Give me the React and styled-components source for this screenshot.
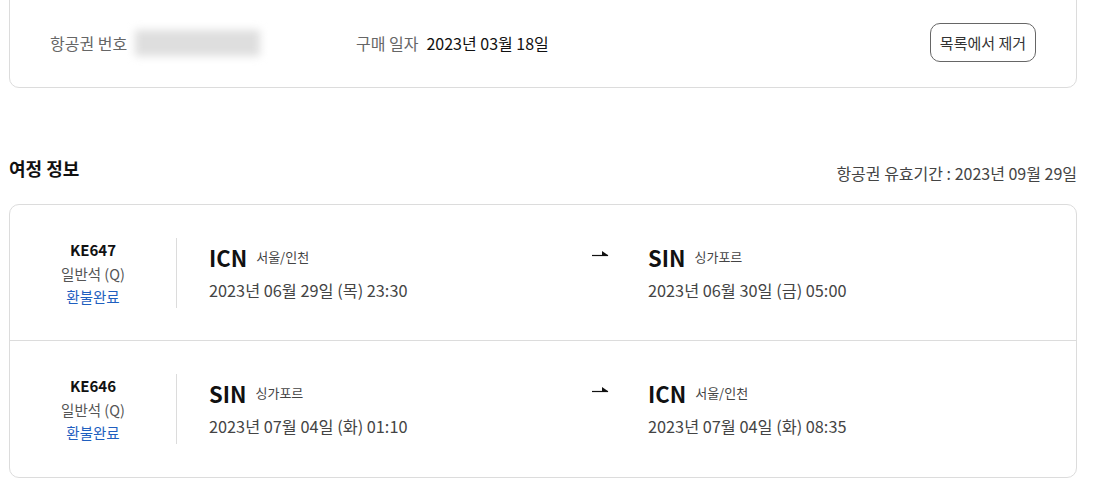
import React from 'react'
import styled, { createGlobalStyle } from 'styled-components'

const GlobalStyle = createGlobalStyle`
	body {
		margin: 0;
		background: #fff;
		font-family: "Noto Sans CJK KR", "Noto Sans", sans-serif;
		color: #111;
	}
`

const FLIGHTS = [
	{
		no: 'KE647',
		cabin: '일반석 (Q)',
		status: '환불완료',
		from: { code: 'ICN', city: '서울/인천', date: '2023년 06월 29일 (목) 23:30' },
		to: { code: 'SIN', city: '싱가포르', date: '2023년 06월 30일 (금) 05:00' }
	},
	{
		no: 'KE646',
		cabin: '일반석 (Q)',
		status: '환불완료',
		from: { code: 'SIN', city: '싱가포르', date: '2023년 07월 04일 (화) 01:10' },
		to: { code: 'ICN', city: '서울/인천', date: '2023년 07월 04일 (화) 08:35' }
	}
]

const Arrow = () => (
	<ArrowSvg width='17' height='10' viewBox='0 0 17 10'>
		<line x1='0' y1='7.5' x2='16' y2='7.5' stroke='#111' strokeWidth='1.2'/>
		<path d='M10 3 L16.5 7.5 L10 7.5 Z' fill='#111'/>
	</ArrowSvg>
)

const Stop = ({ code, city, date }) => (
	<StopBox>
		<StopHead>
			<Code>{code}</Code>
			<City>{city}</City>
		</StopHead>
		<StopDate>{date}</StopDate>
	</StopBox>
)

const App = () => (
	<>
		<GlobalStyle/>
		<Page>
			<TicketCard>
				<InfoGroup>
					<Label>항공권 번호</Label>
					<Blurred/>
				</InfoGroup>
				<InfoGroup>
					<Label>구매 일자</Label>
					<Value>2023년 03월 18일</Value>
				</InfoGroup>
				<RemoveButton>목록에서 제거</RemoveButton>
			</TicketCard>

			<SectionHead>
				<SectionTitle>여정 정보</SectionTitle>
				<Validity>항공권 유효기간 : 2023년 09월 29일</Validity>
			</SectionHead>

			<ItineraryCard>
				{FLIGHTS.map((f) => (
					<FlightRow key={f.no}>
						<FlightInfo>
							<FlightNo>{f.no}</FlightNo>
							<Cabin>{f.cabin}</Cabin>
							<Status>{f.status}</Status>
						</FlightInfo>
						<Route>
							<Stop {...f.from}/>
							<ArrowCell><Arrow/></ArrowCell>
							<Stop {...f.to}/>
						</Route>
					</FlightRow>
				))}
			</ItineraryCard>
		</Page>
	</>
)

export default App

const Page = styled.div`
	width: 1068px;
	padding-left: 9px;
`

const TicketCard = styled.div`
	display: flex;
	align-items: center;
	margin-top: -20px;
	padding: 42px 40px 25px 40px;
	border: 1px solid #dcdcdc;
	border-radius: 10px;
`

const InfoGroup = styled.div`
	display: flex;
	align-items: center;
	width: 306px;
	gap: 8px;
`

const Label = styled.span`
	font-size: 16px;
	color: #666;
`

const Value = styled.span`
	font-size: 16px;
	color: #111;
`

const Blurred = styled.span`
	display: inline-block;
	width: 125px;
	height: 26px;
	background: #dedede;
	filter: blur(4px);
`

const RemoveButton = styled.button`
	margin-left: auto;
	height: 39px;
	padding: 0 9px;
	font-family: inherit;
	font-size: 15px;
	color: #333;
	background: #fff;
	border: 1px solid #666;
	border-radius: 10px;
`

const SectionHead = styled.div`
	display: flex;
	justify-content: space-between;
	align-items: flex-end;
	margin-top: 68px;
	margin-bottom: 24px;
`

const SectionTitle = styled.h3`
	margin: 0;
	font-size: 18px;
	font-weight: 700;
	line-height: 24px;
	color: #111;
`

const Validity = styled.span`
	font-size: 16px;
	line-height: 22px;
	color: #444;
	margin-bottom: -4px;
`

const ItineraryCard = styled.div`
	border: 1px solid #dcdcdc;
	border-radius: 10px;
`

const FlightRow = styled.div`
	display: flex;
	align-items: center;
	padding: 33px 0 32px;
	border-top: 1px solid #dcdcdc;

	&:first-child {
		border-top: none;
	}

	&:last-child {
		padding-bottom: 33px;
	}
`

const FlightInfo = styled.div`
	display: flex;
	flex-direction: column;
	align-items: center;
	width: 166px;
	height: 70px;
	border-right: 1px solid #dcdcdc;
	font-size: 14.5px;
	line-height: 23.5px;
`

const FlightNo = styled.span`
	font-size: 15px;
	font-weight: 700;
	color: #111;
`

const Cabin = styled.span`
	color: #555;
`

const Status = styled.span`
	color: #1f5fbf;
`

const Route = styled.div`
	display: grid;
	grid-template-columns: 383px 56px 1fr;
	align-items: start;
	padding-left: 32px;
`

const ArrowCell = styled.div`
	padding-top: 4px;
`

const ArrowSvg = styled.svg`
	display: block;
`

const StopBox = styled.div`
	display: flex;
	flex-direction: column;
	gap: 6px;
	margin-top: -2px;
`

const StopHead = styled.div`
	display: flex;
	align-items: center;
	gap: 9px;
`

const Code = styled.span`
	font-size: 22px;
	font-weight: 700;
	line-height: 30px;
	color: #111;
`

const City = styled.span`
	font-size: 13px;
	color: #444;
	margin-top: -2px;
`

const StopDate = styled.span`
	font-size: 16.3px;
	line-height: 24px;
	color: #444;
`
